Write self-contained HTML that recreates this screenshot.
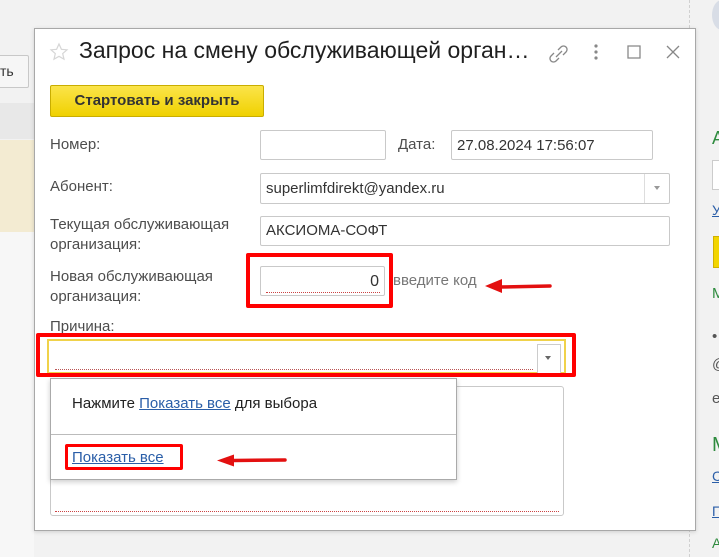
<!DOCTYPE html>
<html><head><meta charset="utf-8"><style>
*{box-sizing:border-box;margin:0;padding:0}
body{width:719px;height:557px;position:relative;overflow:hidden;background:#f2f2f2;font-family:"Liberation Sans",Arial,sans-serif;color:#404040}
.a{position:absolute}
.inp{position:absolute;background:#fff;border:1px solid #c9c9c9;border-radius:2px;font-size:15px;color:#333;padding:0 5px;line-height:28px}
.lbl{position:absolute;font-size:15px;color:#4d4d4d;line-height:20px}
.red{position:absolute;border:4px solid #f00;border-radius:2px}
.link{color:#2a5ea8;text-decoration:underline}
</style></head><body>
<div class="a" style="left:-4px;top:55px;width:33px;height:33px;background:#f6f6f6;border:1px solid #c8c8c8;border-radius:2px;font-size:14px;line-height:31px;color:#333;padding-left:3px">ть</div>
<div class="a" style="left:0;top:103px;width:34px;height:36px;background:#e8e8e8"></div>
<div class="a" style="left:0;top:140px;width:34px;height:92px;background:#f3ebd2"></div>
<div class="a" style="left:0;top:232px;width:34px;height:325px;background:#f7f7f7"></div>
<div class="a" style="left:689px;top:0;height:557px;border-left:1px dashed #d0d0d0"></div>
<div class="a" style="left:712px;top:0;width:20px;height:30px;border-radius:50%;background:#d8dde6"></div>
<div class="a" style="left:712px;top:128px;font-size:18px;color:#2e8b3e">А</div>
<div class="a" style="left:712px;top:160px;width:12px;height:30px;border:1px solid #ccc;background:#fff"></div>
<div class="a" style="left:712px;top:202px;font-size:14px;color:#2a5ea8;text-decoration:underline">У</div>
<div class="a" style="left:713px;top:236px;width:10px;height:32px;background:#f2d500;border:1px solid #d0b000"></div>
<div class="a" style="left:712px;top:285px;font-size:15px;color:#2e8b3e">М</div>
<div class="a" style="left:712px;top:328px;font-size:15px;color:#555">•</div>
<div class="a" style="left:712px;top:356px;font-size:15px;color:#555">@</div>
<div class="a" style="left:712px;top:390px;font-size:15px;color:#555">e</div>
<div class="a" style="left:712px;top:434px;font-size:20px;color:#2e8b3e">М</div>
<div class="a" style="left:712px;top:468px;font-size:14px;color:#2a5ea8;text-decoration:underline">С</div>
<div class="a" style="left:712px;top:503px;font-size:14px;color:#2a5ea8;text-decoration:underline">П</div>
<div class="a" style="left:712px;top:535px;font-size:14px;color:#2e8b3e">А</div>
<div class="a" style="left:34px;top:28px;width:662px;height:503px;background:#fff;border:1px solid #a8a8a8;box-shadow:0 1px 4px rgba(0,0,0,.15)"></div>
<svg class="a" style="left:49px;top:42px" width="20" height="20" viewBox="0 0 20 20"><path d="M10 2l2.4 5.3 5.6.5-4.3 3.8 1.3 5.6L10 14.3 5 17.2l1.3-5.6L2 7.8l5.6-.5z" fill="none" stroke="#d6d6d6" stroke-width="1.2"/></svg>
<div class="a" style="left:79px;top:37px;font-size:23px;color:#1f1f1f;white-space:nowrap">Запрос на смену обслуживающей орган…</div>
<svg class="a" style="left:540px;top:30px" width="160" height="45" viewBox="0 0 160 45">
<g fill="none" stroke="#888" stroke-width="1.3"><path d="M18 20l3-3a3.5 3.5 0 015 5l-3 3M19 28l-3 3a3.5 3.5 0 01-5-5l3-3M16 27l6-6"/>
<path d="M88 16h12v12H88z"/><path d="M127 16l12 12M139 16l-12 12"/></g>
<g fill="#888"><circle cx="56" cy="16" r="1.6"/><circle cx="56" cy="22" r="1.6"/><circle cx="56" cy="28" r="1.6"/></g></svg>
<div class="a" style="left:50px;top:85px;width:214px;height:32px;background:linear-gradient(#fbe44a,#f0d100);border:1px solid #c9ad00;border-radius:2px;font-weight:bold;font-size:15px;color:#333;text-align:center;line-height:30px">Стартовать и закрыть</div>
<div class="lbl" style="left:50px;top:135px">Номер:</div>
<div class="inp" style="left:260px;top:130px;width:126px;height:30px"></div>
<div class="lbl" style="left:398px;top:135px">Дата:</div>
<div class="inp" style="left:451px;top:130px;width:202px;height:30px;line-height:29px">27.08.2024 17:56:07</div>
<div class="lbl" style="left:50px;top:177px">Абонент:</div>
<div class="inp" style="left:260px;top:173px;width:410px;height:31px;line-height:29px">superlimfdirekt@yandex.ru</div>
<div class="a" style="left:644px;top:174px;width:1px;height:29px;background:#ddd"></div>
<div class="a" style="left:654px;top:186px;border:3px solid transparent;border-top:4px solid #999"></div>
<div class="lbl" style="left:50px;top:215px">Текущая обслуживающая<br>организация:</div>
<div class="inp" style="left:260px;top:216px;width:410px;height:30px;line-height:27px">АКСИОМА-СОФТ</div>
<div class="lbl" style="left:50px;top:267px">Новая обслуживающая<br>организация:</div>
<div class="inp" style="left:260px;top:266px;width:125px;height:30px;text-align:right;font-size:16px;line-height:30px"><span>0</span></div>
<div class="a" style="left:266px;top:292px;width:114px;border-top:1px dotted #c44"></div>
<div class="red" style="left:246px;top:253px;width:147px;height:55px"></div>
<div class="a" style="left:393px;top:272px;font-size:15px;color:#777">введите код</div>
<svg class="a" style="left:480px;top:275px" width="75" height="20"><path d="M70 11L20 12" stroke="#e31010" stroke-width="3.5" stroke-linecap="round"/><path d="M5 11l17-7v14z" fill="#e31010"/></svg>
<div class="lbl" style="left:50px;top:317px">Причина:</div>
<div class="a" style="left:47px;top:339px;width:519px;height:35px;border:2px solid #f0d24a;background:#fff"></div>
<div class="a" style="left:55px;top:369px;width:478px;border-top:1px dotted #b55"></div>
<div class="a" style="left:537px;top:344px;width:24px;height:30px;border:1px solid #ccc;background:#fff"></div>
<div class="a" style="left:545px;top:356px;border:3px solid transparent;border-top:4px solid #666"></div>
<div class="red" style="left:36px;top:333px;width:540px;height:44px"></div>
<div class="a" style="left:50px;top:386px;width:514px;height:130px;border:1px solid #c9c9c9;border-radius:3px;background:#fff"></div>
<div class="a" style="left:55px;top:511px;width:504px;border-top:1px dotted #c44"></div>
<div class="a" style="left:50px;top:378px;width:407px;height:102px;background:#fff;border:1px solid #aaa;box-shadow:0 2px 5px rgba(0,0,0,.2)"></div>
<div class="a" style="left:51px;top:434px;width:405px;border-top:1px solid #bbb"></div>
<div class="a" style="left:72px;top:395px;font-size:15px;color:#222">Нажмите <span class="link">Показать все</span> для выбора</div>
<div class="a" style="left:72px;top:449px;font-size:15px"><span class="link">Показать все</span></div>
<div class="red" style="left:65px;top:444px;width:118px;height:26px;border-width:3px"></div>
<svg class="a" style="left:212px;top:450px" width="80" height="20"><path d="M73 10L22 10.5" stroke="#e31010" stroke-width="3.5" stroke-linecap="round"/><path d="M5 10.5l17-6v12z" fill="#e31010"/></svg>
</body></html>
